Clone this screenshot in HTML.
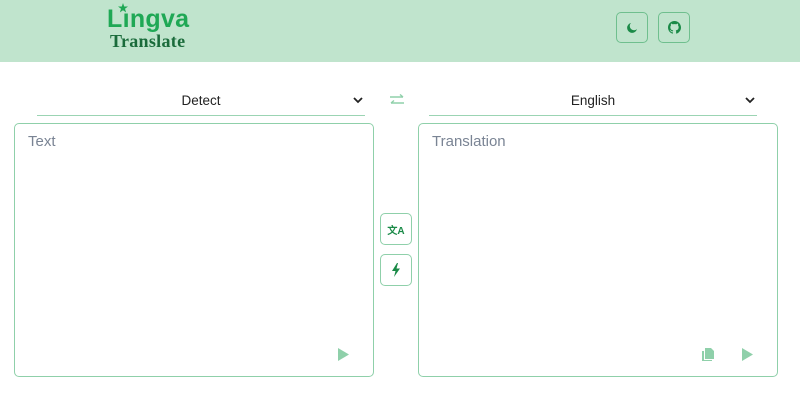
<!DOCTYPE html>
<html><head><style>
*{box-sizing:border-box;margin:0;padding:0}
body{width:800px;height:407px;background:#fff;font-family:"Liberation Sans",sans-serif;position:relative;overflow:hidden}
.hdr{position:absolute;left:0;top:0;width:800px;height:62px;background:#c0e4cd}
.logo1{position:absolute;left:107px;top:5px;font:bold 25px "Liberation Sans",sans-serif;color:#1fa855;letter-spacing:0.3px}
.logo2{position:absolute;left:110px;top:31px;font:bold 18px "Liberation Serif",serif;color:#1a6b3b;letter-spacing:0.3px}
.hb{position:absolute;top:12px;width:32px;height:31px;border:1px solid #6fbf8e;border-radius:5px;display:flex;align-items:center;justify-content:center}
.sel{position:absolute;top:88px;height:28px;border-bottom:1px solid #9bd4b3;font-size:13.5px;color:#222;text-align:center;line-height:26px}
.sel svg{position:absolute;right:2px;top:9px}
.box{position:absolute;top:123px;width:360px;height:254px;border:1px solid #8fd0aa;border-radius:5px}
.ph{position:absolute;left:13px;top:9px;font-size:15px;color:#7a8494}
.mb{position:absolute;left:380px;width:32px;height:32px;border:1px solid #8fd0aa;border-radius:5px;display:flex;align-items:center;justify-content:center}
</style></head><body>
<div class="hdr">
<div class="logo1">L&#305;ngva</div>
<svg style="position:absolute;left:118px;top:3px" width="10" height="10" viewBox="0 0 10 10"><path d="M5 0L6.2 3.5H10L7 5.7 8.1 9.4 5 7.2 1.9 9.4 3 5.7 0 3.5H3.8Z" fill="#1fa855"/></svg>
<div class="logo2">Translate</div>
<div class="hb" style="left:616px"><svg width="12" height="12" viewBox="0 0 12 12"><path d="M5 1A5 5 0 1 0 11 7 4 4 0 0 1 5 1Z" fill="#1a8a47"/></svg></div>
<div class="hb" style="left:658px"><svg width="13" height="13" viewBox="0 0 16 16"><path fill="#1a8a47" d="M8 0C3.6 0 0 3.6 0 8c0 3.5 2.3 6.5 5.5 7.6.4.1.5-.2.5-.4v-1.4c-2.2.5-2.7-1-2.7-1-.4-.9-.9-1.200-.9-1.2-.7-.5.1-.5.1-.5.8.1 1.2.8 1.2.8.7 1.3 1.9.9 2.3.7.1-.5.3-.9.5-1.1-1.8-.2-3.6-.9-3.600-4 0-.9.3-1.6.8-2.1-.1-.2-.4-1 .1-2.1 0 0 .7-.2 2.2.8.6-.2 1.3-.3 2-.3s1.4.1 2 .3c1.5-1 2.2-.8 2.2-.8.4 1.1.2 1.9.1 2.1.5.6.8 1.3.8 2.1 0 3.1-1.9 3.7-3.6 3.9.3.3.5.8.5 1.5v2.2c0 .2.1.5.6.4C13.7 14.5 16 11.5 16 8c0-4.4-3.6-8-8-8z"/></svg></div>
</div>
<div class="sel" style="left:37px;width:328px">Detect<svg width="10" height="7" viewBox="0 0 10 7"><path d="M1 1l4 4 4-4" stroke="#222" stroke-width="1.8" fill="none"/></svg></div>
<svg style="position:absolute;left:389px;top:94px" width="16" height="12" viewBox="0 0 16 12"><path d="M1 3h13M11 0.5l3 2.5M15 9H2M5 6.5l-3 2.5" stroke="#8fd0aa" stroke-width="1.4" fill="none"/></svg>
<div class="sel" style="left:429px;width:328px">English<svg width="10" height="7" viewBox="0 0 10 7"><path d="M1 1l4 4 4-4" stroke="#222" stroke-width="1.8" fill="none"/></svg></div>
<div class="box" style="left:14px"><div class="ph">Text</div>
<svg style="position:absolute;left:322px;top:224px" width="12" height="13" viewBox="0 0 12 13"><path d="M1 0L12 6.5 1 13Z" fill="#8fd0aa"/></svg></div>
<div class="box" style="left:418px"><div class="ph">Translation</div>
<svg style="position:absolute;left:283px;top:224px" width="12" height="13" viewBox="0 0 12 13"><path d="M3 0h6l3 3v8H3z M0 3h2v9h8v1H0z" fill="#8fd0aa"/></svg>
<svg style="position:absolute;left:322px;top:224px" width="12" height="13" viewBox="0 0 12 13"><path d="M1 0L12 6.5 1 13Z" fill="#8fd0aa"/></svg></div>
<div class="mb" style="top:213px"><span style="font:bold 10px 'Liberation Sans',sans-serif;color:#1a8a47">文A</span></div>
<div class="mb" style="top:254px"><svg width="10" height="14" viewBox="0 0 10 14"><path d="M6 0L1 8h3.5L3 14l6-8.5H5.5L7 0Z" fill="#1a8a47"/></svg></div>
</body></html>
